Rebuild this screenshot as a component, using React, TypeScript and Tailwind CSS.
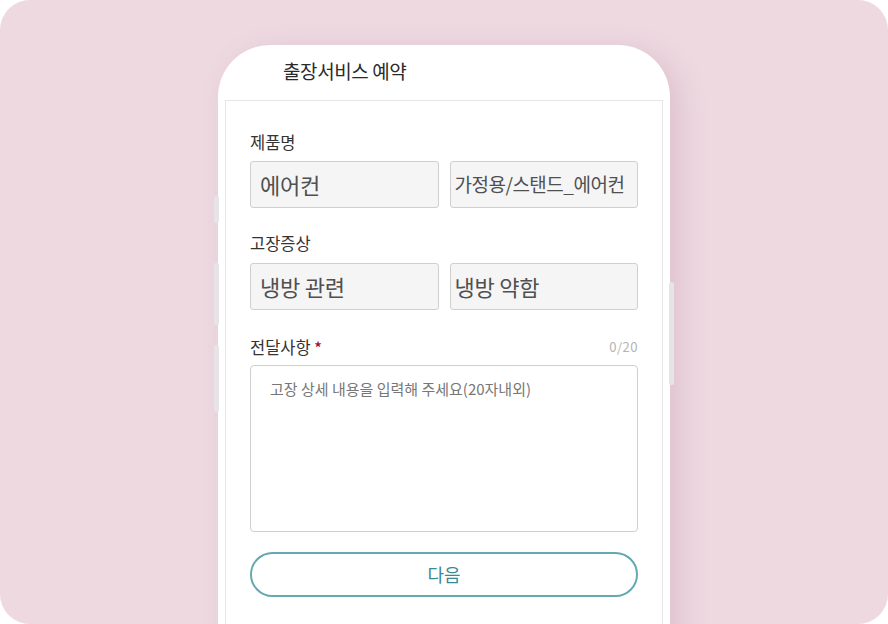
const font = { fontFamily: '"Noto Sans CJK KR", "Noto Sans", sans-serif' };

function Field({ value, tight, small }: { value: string; tight?: boolean; small?: boolean }) {
  return (
    <div
      className={`h-[47px] flex items-center rounded-[3px] border border-[#cfcfcf] bg-[#f5f5f5] text-[#505050] whitespace-nowrap overflow-hidden ${
        tight ? "pl-[4px]" : "pl-[9px]"
      } ${small ? "text-[19px] tracking-[-0.5px]" : "text-[22px] tracking-[-0.2px]"}`}
    >
      {value}
    </div>
  );
}

function SideKey({ className }: { className: string }) {
  return <div className={`absolute w-[5px] rounded-[2px] bg-[#e6e4e7] ${className}`} />;
}

export default function App() {
  return (
    <div className="w-[888px] h-[624px] bg-white" style={font}>
      <div className="w-full h-full rounded-[30px] bg-[#eed9e1] overflow-hidden flex justify-center pt-[45px]">
        <div className="relative w-[452px] h-[620px] rounded-t-[52px] bg-white shadow-[10px_6px_28px_rgba(150,90,115,0.18)]">
          {/* hardware keys */}
          <SideKey className="-left-[4px] top-[151px] h-[27px]" />
          <SideKey className="-left-[4px] top-[218px] h-[62px]" />
          <SideKey className="-left-[4px] top-[300px] h-[67px]" />
          <SideKey className="-right-[4px] top-[237px] h-[103px]" />

          <div className="px-[7px] h-full flex flex-col">
            <header className="h-[55px] flex items-center pl-[58px] pb-[2px] text-[19px] text-[#2a2a2a] tracking-[-0.4px]">
              출장서비스 예약
            </header>

            <main className="flex-1 border-t border-x border-[#e6e6e6] px-[24px]">
              <div className="pt-[31px] text-[16.5px] leading-[20px] text-[#333]">제품명</div>
              <div className="mt-[9px] grid grid-cols-2 gap-[11px]">
                <Field value="에어컨" />
                <Field value="가정용/스탠드_에어컨" tight small />
              </div>

              <div className="mt-[25px] text-[16.5px] leading-[20px] text-[#333]">고장증상</div>
              <div className="mt-[10px] grid grid-cols-2 gap-[11px]">
                <Field value="냉방 관련" />
                <Field value="냉방 약함" tight />
              </div>

              <div className="mt-[27px] flex items-center justify-between leading-[20px]">
                <span className="text-[16.5px] text-[#333]">
                  전달사항 <span className="text-[#a3123f] text-[14px] font-bold align-top">*</span>
                </span>
                <span className="text-[13px] text-[#b3b3b3] tracking-[0.5px]">0/20</span>
              </div>
              <div className="mt-[8px] h-[167px] rounded-[4px] border border-[#cfcfcf] bg-white px-[19px] pt-[13px] text-[15px] leading-[20px] text-[#777]">
                고장 상세 내용을 입력해 주세요(20자내외)
              </div>

              <button className="mt-[20px] w-full h-[45px] rounded-full border-2 border-[#64a9b1] bg-white text-[18px] leading-[20px] pb-[2px] text-[#3a8a94]">
                다음
              </button>
            </main>
          </div>
        </div>
      </div>
    </div>
  );
}
